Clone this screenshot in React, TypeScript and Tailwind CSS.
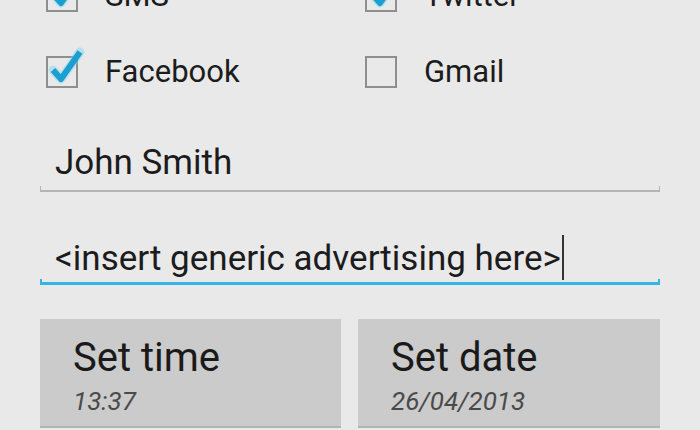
import React from 'react';

const CheckMark = ({ checked }: { checked: boolean }) => (
  <div className="relative w-[32px] h-[32px] shrink-0">
    <div className="absolute inset-0 border-2 border-[#8f8f8f]" />
    {checked && (
      <svg className="absolute left-[2px] top-[-10px] overflow-visible" width="36" height="40" viewBox="0 0 36 40">
        <path d="M5 24 L13 33 L32 6" fill="none" stroke="#7fd2ef" strokeWidth="9" strokeLinecap="round" strokeLinejoin="round" opacity="0.45" />
        <path d="M5 24 L13 33 L32 6" fill="none" stroke="#1a9fd0" strokeWidth="6" strokeLinejoin="round" />
      </svg>
    )}
  </div>
);

const Option = ({ label, checked }: { label: string; checked: boolean }) => (
  <div className="h-[76px] flex items-center gap-[27px]">
    <CheckMark checked={checked} />
    <span className="text-[31px] leading-[36px] text-[#1c1c1c]">{label}</span>
  </div>
);

/** Holo-style underline with small raised ends */
const Underline = ({ focused }: { focused?: boolean }) => (
  <div className="relative h-[3px]">
    {focused ? (
      <>
        <div className="absolute left-0 right-0 bottom-0 h-[3px] bg-[#33b5e5]" />
        <div className="absolute left-0 bottom-0 w-[2px] h-[6px] bg-[#33b5e5]" />
        <div className="absolute right-0 bottom-0 w-[2px] h-[6px] bg-[#33b5e5]" />
      </>
    ) : (
      <>
        <div className="absolute left-0 right-0 bottom-0 h-[2px] bg-[#b4b4b4]" />
        <div className="absolute left-0 bottom-0 w-[1px] h-[6px] bg-[#b4b4b4]" />
        <div className="absolute right-0 bottom-0 w-[1px] h-[6px] bg-[#b4b4b4]" />
      </>
    )}
  </div>
);

const PickerButton = ({ title, value }: { title: string; value: string }) => (
  <div className="h-[109px] bg-[#cbcbcb] border-b-2 border-[#b3b3b3] pl-[33px] pt-[16px]">
    <div className="text-[40px] leading-[46px] text-[#1a1a1a]">{title}</div>
    <div className="text-[26px] leading-[30px] italic text-[#4a4a4a] mt-[5px]">{value}</div>
  </div>
);

export default function App() {
  return (
    <div
      className="w-[700px] h-[430px] overflow-hidden bg-[#e9e9e9]"
      style={{ fontFamily: 'Roboto, "Noto Sans", sans-serif' }}
    >
      <div className="px-[40px]">
        <div className="grid grid-cols-[319px_1fr] pl-[6px] mt-[-42px]">
          <Option label="SMS" checked />
          <Option label="Twitter" checked />
          <Option label="Facebook" checked />
          <Option label="Gmail" checked={false} />
        </div>

        <div className="mt-[33px]">
          <div className="px-[15px] h-[40px] text-[35px] leading-[40px] text-[#1c1c1c]">John Smith</div>
          <div className="mt-[6px]">
            <Underline />
          </div>
        </div>

        <div className="mt-[47px]">
          <div className="px-[15px] h-[40px] text-[35px] leading-[40px] text-[#1c1c1c] flex items-center">
            <span>&lt;insert generic advertising here&gt;</span>
            <span className="w-[2px] h-[45px] bg-[#333] ml-[1px] mt-[-4px]" />
          </div>
          <div className="mt-[3px]">
            <Underline focused />
          </div>
        </div>

        <div className="mt-[34px] grid grid-cols-[301px_302px] gap-[17px]">
          <PickerButton title="Set time" value="13:37" />
          <PickerButton title="Set date" value="26/04/2013" />
        </div>
      </div>
    </div>
  );
}
